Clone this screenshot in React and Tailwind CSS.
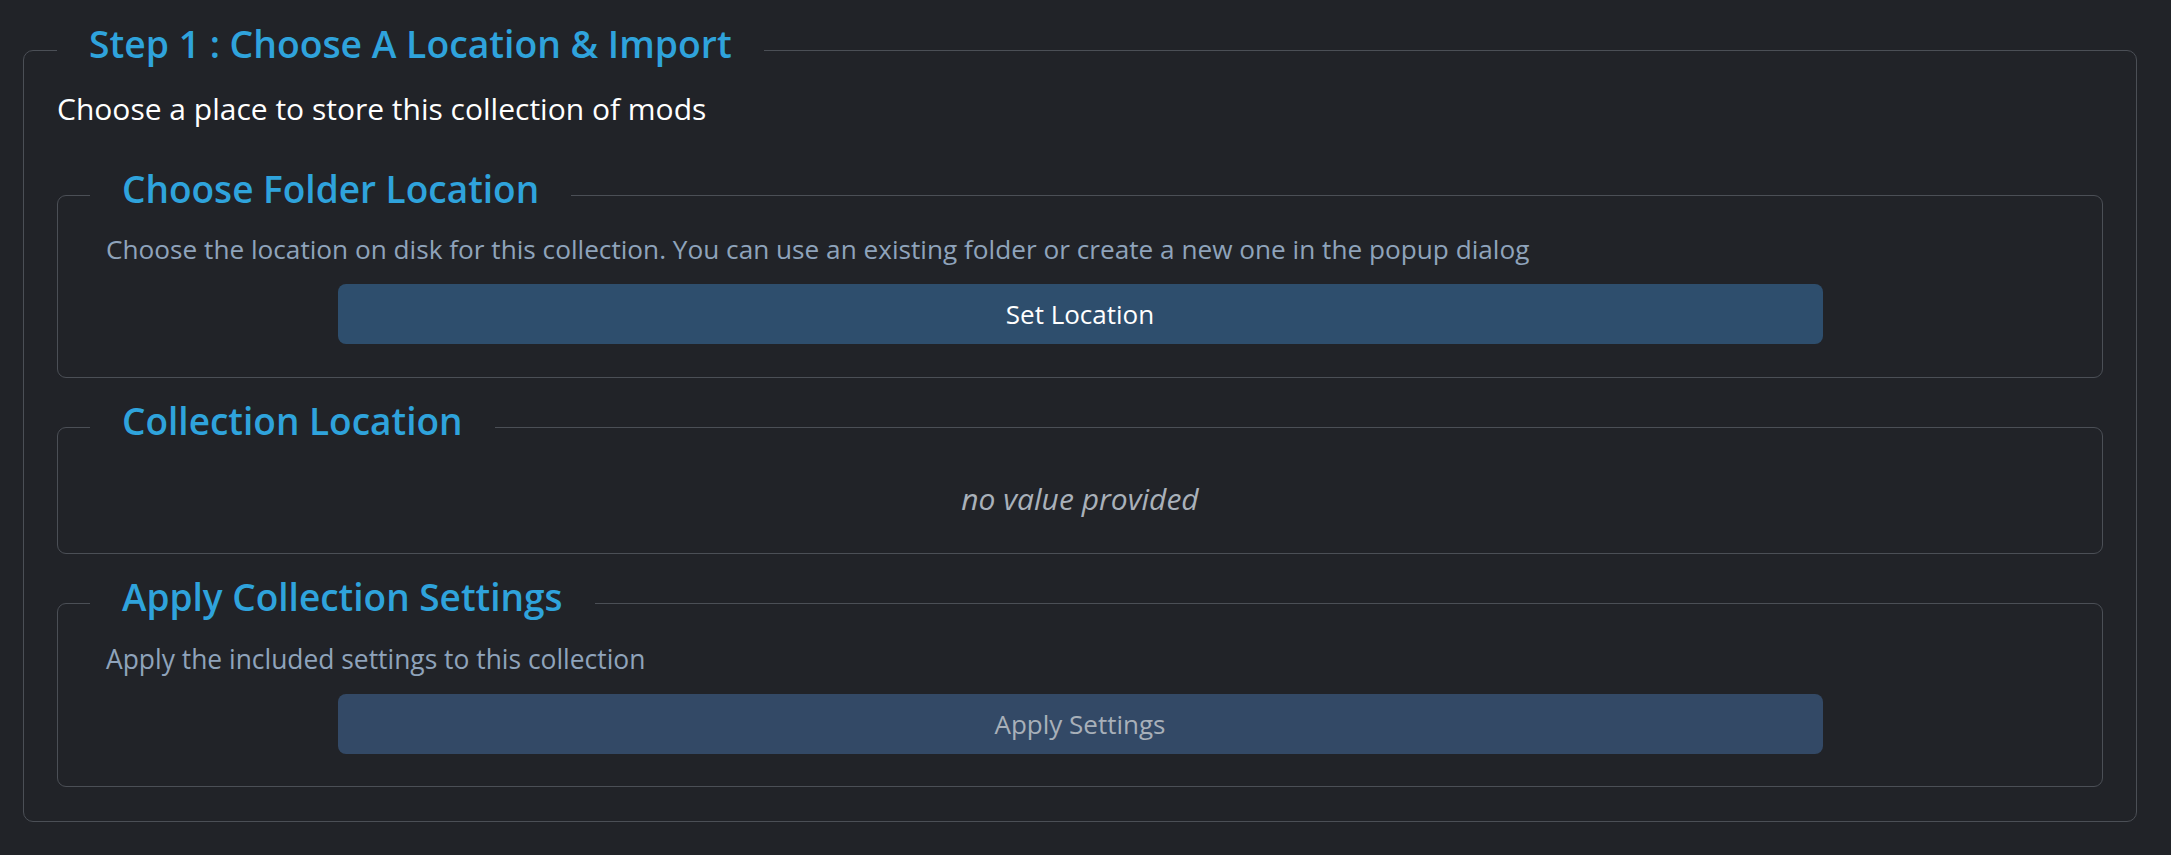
import React from "react";

const FONT = { fontFamily: '"Open Sans", "Noto Sans", sans-serif' };

function Section({ title, children, className = "" }) {
  return (
    <fieldset className={"border border-[#4b4f56] rounded-[9px] px-8 " + className}>
      <legend className="px-8 pb-[12px] text-[37px] leading-[46px] font-semibold text-[#2fa3dc]">
        {title}
      </legend>
      {children}
    </fieldset>
  );
}

export default function App() {
  return (
    <div
      className="min-h-screen w-full bg-[#212328] pl-[23px] pr-[34px] pt-[20px] pb-[34px]"
      style={FONT}
    >
      <fieldset className="border border-[#4b4f56] rounded-[10px] px-[33px] pb-[34px]">
        <legend className="px-8 pb-[12px] text-[37.3px] leading-[48px] font-semibold text-[#2fa3dc]">
          Step 1 : Choose A Location &amp; Import
        </legend>
        <p className="mt-[9px] text-[30px] leading-[40px] text-white">
          Choose a place to store this collection of mods
        </p>

        <Section title="Choose Folder Location" className="mt-[37px] pb-[33px]">
          <p className="mt-[7px] pl-4 text-[26.2px] leading-[36px] text-[#8fa3bb]">
            Choose the location on disk for this collection. You can use an existing folder or create a new one in the popup dialog
          </p>
          <button className="mx-auto mt-[17px] flex h-[60px] w-3/4 items-center justify-center rounded-[8px] bg-[#2e4e6d] text-[26px] text-white">
            Set Location
          </button>
        </Section>

        <Section title="Collection Location" className="mt-[20px] pb-[36px]">
          <p className="mt-[25px] text-center text-[30px] italic leading-[36px] text-[#a9b1ba]">
            no value provided
          </p>
        </Section>

        <Section title="Apply Collection Settings" className="mt-[20px] pb-[32px]">
          <p className="mt-[9px] pl-4 text-[26.4px] leading-[36px] text-[#8fa3bb]">
            Apply the included settings to this collection
          </p>
          <button className="mx-auto mt-[17px] flex h-[60px] w-3/4 items-center justify-center rounded-[8px] bg-[#334966] text-[26px] text-[#a8b0b9]">
            Apply Settings
          </button>
        </Section>
      </fieldset>
    </div>
  );
}
